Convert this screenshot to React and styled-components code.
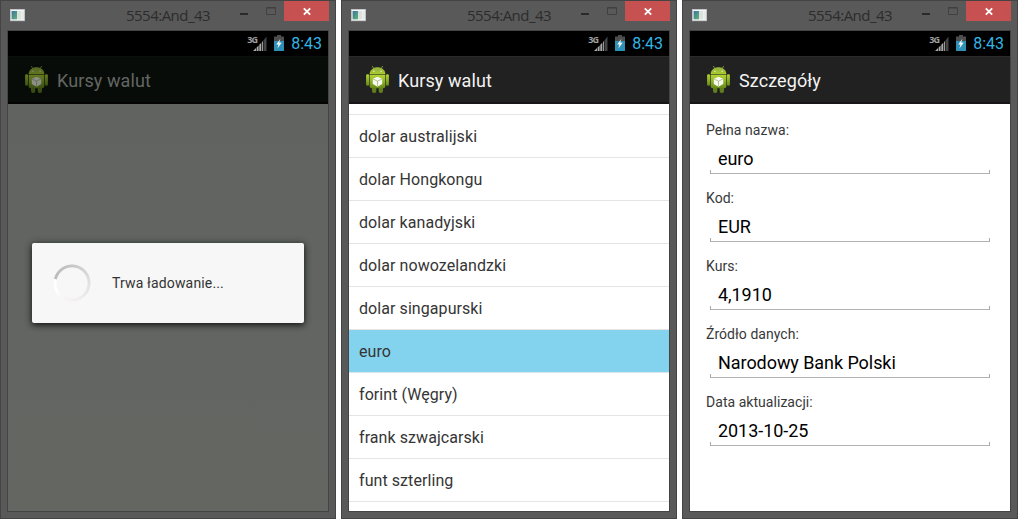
import React from "react";
import styled, { createGlobalStyle } from "styled-components";

const GlobalStyle = createGlobalStyle`
  * { box-sizing: border-box; }
  body { margin: 0; background: #fff; overflow: hidden; }
`;

const Desktop = styled.main`
  display: flex;
  gap: 5px;
  width: 1018px;
  height: 519px;
  font-family: Roboto, "Noto Sans", sans-serif;
`;

const Frame = styled.section`
  display: flex;
  flex-direction: column;
  width: 336px;
  height: 519px;
  padding: 0 6px 6px;
  border: 1px solid #444;
  background: #595959;
`;

const TitleBar = styled.header`
  display: flex;
  align-items: flex-start;
  height: 29px;
  flex: none;
`;

const AppGlyph = styled.svg`
  display: block;
  margin: 7px 0 0 2px;
  flex: none;
`;

const WindowTitle = styled.h1`
  flex: 1;
  margin: 0;
  padding: 4px 0 0 100px;
  font: 400 15px/21px "Open Sans", "Noto Sans", sans-serif;
  letter-spacing: -0.52px;
  color: #2c2c2c;
  white-space: nowrap;
`;

const Controls = styled.svg`
  display: block;
  flex: none;
`;

const Screen = styled.div`
  display: flex;
  flex-direction: column;
  width: 322px;
  height: 482px;
  border: 1px solid #444;
  background: #fff;
  overflow: hidden;
`;

const StatusBar = styled.div`
  display: flex;
  align-items: center;
  justify-content: flex-end;
  flex: none;
  height: 25px;
  padding-right: 6px;
  background: #000;
`;

const Clock = styled.span`
  margin-left: 7px;
  font-size: 16px;
  line-height: 25px;
  color: #33b5e5;
`;

const ActionBar = styled.div`
  display: flex;
  align-items: center;
  flex: none;
  height: 48px;
  padding-left: 15px;
  background: ${(p) => (p.$dim ? "#080c08" : "#212121")};
  border-top: 1px solid ${(p) => (p.$dim ? "#0c100c" : "#2b2b2b")};
  border-bottom: 2px solid ${(p) => (p.$dim ? "#030403" : "#171518")};
  color: ${(p) => (p.$dim ? "#636663" : "#f3f3f3")};

  svg { opacity: ${(p) => (p.$dim ? 0.55 : 1)}; }
`;

const ActionTitle = styled.h2`
  margin: 2px 0 0 7px;
  font-size: 18px;
  line-height: 24px;
  font-weight: 400;
  letter-spacing: 0.1px;
`;

const Content = styled.div`
  flex: 1;
  min-height: 0;
  overflow: hidden;
  background: ${(p) => (p.$dim ? "linear-gradient(#606360, #646662)" : "#fff")};
`;

const DialogLayer = styled(Content)`
  display: flex;
  justify-content: center;
  align-items: flex-start;
  padding-top: 139px;
`;

const Dialog = styled.div`
  display: flex;
  align-items: center;
  width: 272px;
  height: 80px;
  padding-left: 20px;
  border-radius: 2px;
  background: #f7f7f7;
  box-shadow: 0 2px 6px rgba(0, 0, 0, 0.75), 0 0 7px rgba(45, 65, 50, 0.45);
`;

const Spinner = styled.div`
  width: 40px;
  height: 40px;
  border-radius: 50%;
  background: conic-gradient(from 285deg, #bcbcbc, #c8c8c8 22%, #e2e0e1 45%, #f0eeef 65%, #f7f5f6 80%, #fff 88%, #fff 99%, #bcbcbc);
  mask: radial-gradient(circle, transparent 15.2px, #000 16px 18.1px, transparent 18.9px);
`;

const DialogText = styled.span`
  margin-left: 20px;
  font-size: 14px;
  letter-spacing: 0.15px;
  color: #333;
`;

const List = styled.ul`
  margin: 0;
  padding: 0;
  list-style: none;
`;

const Row = styled.li`
  height: ${(p) => (p.$partial ? "11px" : "43px")};
  padding: 1px 10px 0;
  border-bottom: 1px solid ${(p) => (p.$selected ? "#d9e8ee" : "#e4e4e4")};
  background: ${(p) => (p.$selected ? "#84d3ee" : "#fff")};
  background-clip: padding-box;
  color: #353535;
  font-size: 16px;
  letter-spacing: 0.07px;
  line-height: 42px;
`;

const Form = styled.div`
  display: flex;
  flex-direction: column;
  padding: 15px 16px 0;
`;

const Field = styled.label`
  display: flex;
  flex-direction: column;
  height: 68px;
`;

const Label = styled.span`
  font-size: 14px;
  line-height: 22px;
  letter-spacing: 0.04px;
  color: #383838;
`;

const Value = styled.span`
  height: 33px;
  margin: 0 4px;
  padding: 7px 8px 0;
  font-size: 18px;
  line-height: 22px;
  letter-spacing: -0.06px;
  color: #000;
  background:
    linear-gradient(#a9a9a9, #a9a9a9) left bottom / 1px 4px no-repeat,
    linear-gradient(#a9a9a9, #a9a9a9) right bottom / 1px 4px no-repeat,
    linear-gradient(#b2b2b2, #b2b2b2) left bottom / 100% 1px no-repeat;
`;

function WindowIcon() {
  return (
    <AppGlyph width="17" height="15" viewBox="0 0 17 15">
      <defs>
        <linearGradient id="pane" x1="0" y1="0" x2="1" y2="1">
          <stop offset="0" stopColor="#3b739f" />
          <stop offset="1" stopColor="#64b473" />
        </linearGradient>
      </defs>
      <rect x="1.4" y="1.4" width="14.2" height="11.4" fill="#f4f5f6" stroke="#c5cbd0" strokeWidth=".7" />
      <rect x="2.6" y="3" width="5.6" height="8.300" fill="url(#pane)" />
      <path d="M9 3h3v8.300H9z" fill="#dce1dd" />
      <path d="M12.6 3H15v8.300h-2.4z" fill="#e6e9e6" />
    </AppGlyph>
  );
}

function WindowControls() {
  return (
    <Controls width="95" height="21" viewBox="0 0 95 21">
      <rect x="6" y="12" width="8" height="2" fill="#2a2a2a" />
      <path d="M32.5 6.5h9v7h-9z" fill="none" stroke="#404040" />
      <path d="M32 7.5h10" stroke="#404040" strokeOpacity=".5" />
      <rect x="50" y="0" width="45" height="20" fill="#c75050" />
      <path d="M69.8 7.300l6.400 6.400M76.200 7.300l-6.400 6.400" stroke="#fff" strokeWidth="1.8" />
    </Controls>
  );
}

const NetworkLabel = styled.span`
  align-self: flex-start;
  margin: 4px -5px 0 0;
  font: 700 9px/10px "Open Sans", Roboto, sans-serif;
  letter-spacing: -0.9px;
  color: #a0a0a0;
`;

const Battery = styled.svg`
  display: block;
  margin-left: 7px;
`;

function StatusIcons() {
  return (
    <>
      <NetworkLabel>3G</NetworkLabel>
      <svg width="15" height="17" viewBox="0 0 15 17">
        <path d="M1 16L4 13v3zM4.6 12.4l2-2V16h-2zM7.3 9.7l2-2V16h-2z" fill="#aaa" />
        <path d="M10 7l1-1v10h-1z" fill="#999" />
        <path d="M11.5 5.4L14.5 1.5V16h-3z" fill="#454545" />
      </svg>
      <Battery width="10" height="17" viewBox="0 0 10 17">
        <path d="M3 0h4v1.500h3v5H0v-5h3z" fill="#4d4d4d" />
        <path d="M0 6h10v10H0z" fill="#2f90b7" />
        <path d="M6.4 3.8L2.200 9.400l2.200.2-1 3.800 4.300-5.700-2.500-.3z" fill="#f0f5f7" />
      </Battery>
    </>
  );
}

function Robot() {
  return (
    <svg width="27" height="30" viewBox="0 0 27 30">
      <defs>
        <linearGradient id="robotBody" x1="0" y1="0" x2="0" y2="1">
          <stop offset="0" stopColor="#b4d332" />
          <stop offset=".45" stopColor="#93b62a" />
          <stop offset="1" stopColor="#658817" />
        </linearGradient>
        <linearGradient id="robotHead" x1="0" y1="0" x2="0" y2="1">
          <stop offset="0" stopColor="#93ae40" />
          <stop offset="1" stopColor="#a9cc2d" />
        </linearGradient>
      </defs>
      <path d="M8.3 1l2 3.5M18.7 1l-2 3.5" stroke="#799432" strokeWidth="1" />
      <path d="M5.6 9.2C5.8 5 9.2 2.3 13.5 2.3S21.200 5 21.400 9.200z" fill="url(#robotHead)" />
      <circle cx="9.900" cy="6.200" r=".7" fill="#edf5d4" />
      <circle cx="17.100" cy="6.200" r=".7" fill="#edf5d4" />
      <rect x="2.100" y="9.200" width="3" height="11.600" rx="1.400" fill="url(#robotBody)" />
      <rect x="21.900" y="9.200" width="3" height="11.600" rx="1.400" fill="url(#robotBody)" />
      <rect x="8" y="20" width="4.300" height="8" rx="1.900" fill="#617e1c" />
      <rect x="14.700" y="20" width="4.300" height="8" rx="1.900" fill="#617e1c" />
      <path d="M5.700 9.800h15.600v11.400q0 2-2 2H7.700q-2 0-2-2z" fill="url(#robotBody)" />
      <path d="M13.500 11.800l4.700 2v5.200l-4.700 2.700-4.700-2.700v-5.200z" fill="#f8faf2" />
      <path d="M8.900 13.900l4.600 2.300 4.600-2.300M13.500 16.200v5.300" fill="none" stroke="#a1b57a" strokeWidth=".8" />
    </svg>
  );
}

function Phone({ title, dim, children }) {
  return (
    <Frame>
      <TitleBar>
        <WindowIcon />
        <WindowTitle>5554:And_43</WindowTitle>
        <WindowControls />
      </TitleBar>
      <Screen>
        <StatusBar>
          <StatusIcons />
          <Clock>8:43</Clock>
        </StatusBar>
        <ActionBar $dim={dim}>
          <Robot />
          <ActionTitle>{title}</ActionTitle>
        </ActionBar>
        {children}
      </Screen>
    </Frame>
  );
}

const currencies = [
  "dolar australijski",
  "dolar Hongkongu",
  "dolar kanadyjski",
  "dolar nowozelandzki",
  "dolar singapurski",
  "euro",
  "forint (Węgry)",
  "frank szwajcarski",
  "funt szterling",
];

const details = [
  ["Pełna nazwa:", "euro"],
  ["Kod:", "EUR"],
  ["Kurs:", "4,1910"],
  ["Źródło danych:", "Narodowy Bank Polski"],
  ["Data aktualizacji:", "2013-10-25"],
];

export default function App() {
  return (
    <>
      <GlobalStyle />
      <Desktop>
        <Phone title="Kursy walut" dim>
          <DialogLayer $dim>
            <Dialog>
              <Spinner />
              <DialogText>Trwa ładowanie...</DialogText>
            </Dialog>
          </DialogLayer>
        </Phone>
        <Phone title="Kursy walut">
          <Content>
            <List>
              <Row $partial />
              {currencies.map((name) => (
                <Row key={name} $selected={name === "euro"}>{name}</Row>
              ))}
            </List>
          </Content>
        </Phone>
        <Phone title="Szczegóły">
          <Content>
            <Form>
              {details.map(([label, value]) => (
                <Field key={label}>
                  <Label>{label}</Label>
                  <Value>{value}</Value>
                </Field>
              ))}
            </Form>
          </Content>
        </Phone>
      </Desktop>
    </>
  );
}
